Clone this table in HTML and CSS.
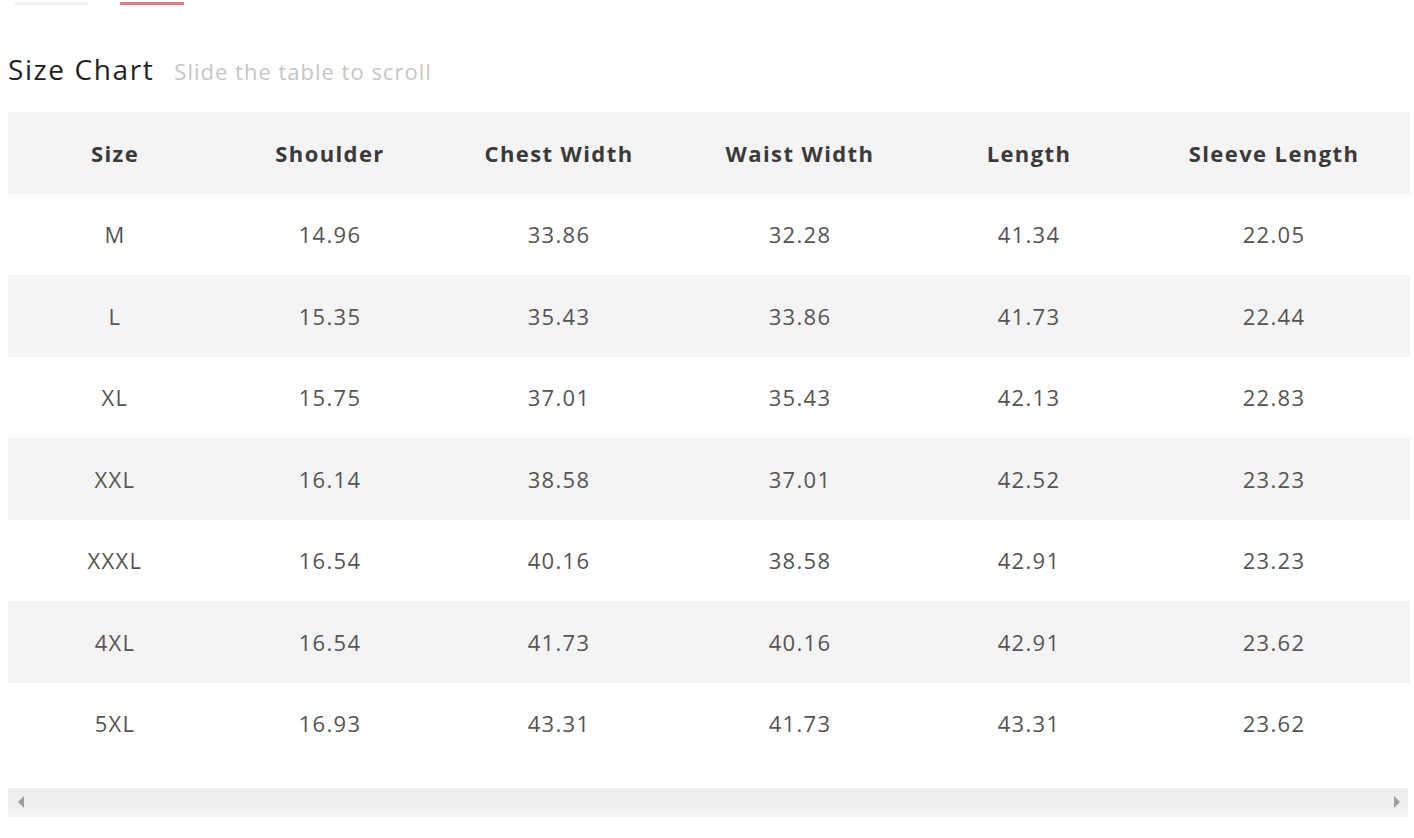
FILE: index.html
```html
<!DOCTYPE html>
<html>
<head>
<meta charset="utf-8">
<link rel="stylesheet" href="styles.css">
</head>
<body>
<div class="tabs">
  <span class="tab tab-gray"></span>
  <span class="tab tab-red"></span>
</div>
<div class="title-row">
  <h2 class="title">Size Chart</h2>
  <span class="hint">Slide the table to scroll</span>
</div>
<div class="table-wrap">
  <table class="chart">
    <colgroup>
      <col class="c1"><col class="c2"><col class="c3"><col class="c4"><col class="c5"><col class="c6">
    </colgroup>
    <thead>
      <tr><th>Size</th><th>Shoulder</th><th>Chest Width</th><th>Waist Width</th><th>Length</th><th>Sleeve Length</th></tr>
    </thead>
    <tbody>
      <tr><td>M</td><td>14.96</td><td>33.86</td><td>32.28</td><td>41.34</td><td>22.05</td></tr>
      <tr><td>L</td><td>15.35</td><td>35.43</td><td>33.86</td><td>41.73</td><td>22.44</td></tr>
      <tr><td>XL</td><td>15.75</td><td>37.01</td><td>35.43</td><td>42.13</td><td>22.83</td></tr>
      <tr><td>XXL</td><td>16.14</td><td>38.58</td><td>37.01</td><td>42.52</td><td>23.23</td></tr>
      <tr><td>XXXL</td><td>16.54</td><td>40.16</td><td>38.58</td><td>42.91</td><td>23.23</td></tr>
      <tr><td>4XL</td><td>16.54</td><td>41.73</td><td>40.16</td><td>42.91</td><td>23.62</td></tr>
      <tr><td>5XL</td><td>16.93</td><td>43.31</td><td>41.73</td><td>43.31</td><td>23.62</td></tr>
    </tbody>
  </table>
  <div class="scrollbar">
    <span class="arrow arrow-left"></span>
    <span class="arrow arrow-right"></span>
  </div>
</div>
</body>
</html>
```
FILE: styles.css
```css
html, body {
  margin: 0;
  padding: 0;
  background: #ffffff;
  font-family: "Open Sans", "Liberation Sans", sans-serif;
}
body {
  width: 1414px;
  height: 838px;
  overflow: hidden;
}
.tabs {
  display: flex;
  height: 5px;
  padding-left: 15px;
  gap: 32px;
  align-items: flex-end;
}
.tab {
  display: block;
  height: 3px;
}
.tab-gray {
  width: 73px;
  background: #f1f1f1;
}
.tab-red {
  width: 64px;
  background: #db7d85;
}
.title-row {
  display: flex;
  align-items: baseline;
  padding: 0 0 0 8px;
  margin-top: 44px;
  height: 63px;
}
.title {
  margin: 0;
  font-size: 28px;
  font-weight: 400;
  color: #222222;
  line-height: 40px;
  letter-spacing: 1.6px;
}
.hint {
  margin-left: 20px;
  font-size: 22px;
  letter-spacing: 1px;
  color: #c6c6c6;
}
.table-wrap {
  padding: 0 4px 0 8px;
}
.chart {
  width: 1402px;
  border-collapse: collapse;
  table-layout: fixed;
}
.c1 { width: 214px; }
.c2 { width: 216px; }
.c3 { width: 242px; }
.c4 { width: 240px; }
.c5 { width: 218px; }
.c6 { width: 272px; }
.chart th, .chart td {
  height: 81.5px;
  padding: 0;
  text-align: center;
  vertical-align: middle;
}
.chart th {
  font-size: 22px;
  font-weight: 700;
  letter-spacing: 1.4px;
  color: #3a3a3a;
  background: #f4f4f4;
}
.chart td {
  font-size: 22px;
  letter-spacing: 1.3px;
  color: #555555;
}
.chart tbody tr:nth-child(even) td {
  background: #f4f4f4;
}
.scrollbar {
  margin-top: 24px;
  height: 29px;
  width: 1400px;
  background: linear-gradient(#eeeeee 0, #efefef 70%, #f6f6f6 100%);
  display: flex;
  align-items: center;
  justify-content: space-between;
  padding: 0 8px 2px 10px;
  box-sizing: border-box;
}
.arrow {
  width: 0;
  height: 0;
  border-top: 6px solid transparent;
  border-bottom: 6px solid transparent;
}
.arrow-left {
  border-right: 6px solid #9e9e9e;
}
.arrow-right {
  border-left: 6px solid #9e9e9e;
}
```
